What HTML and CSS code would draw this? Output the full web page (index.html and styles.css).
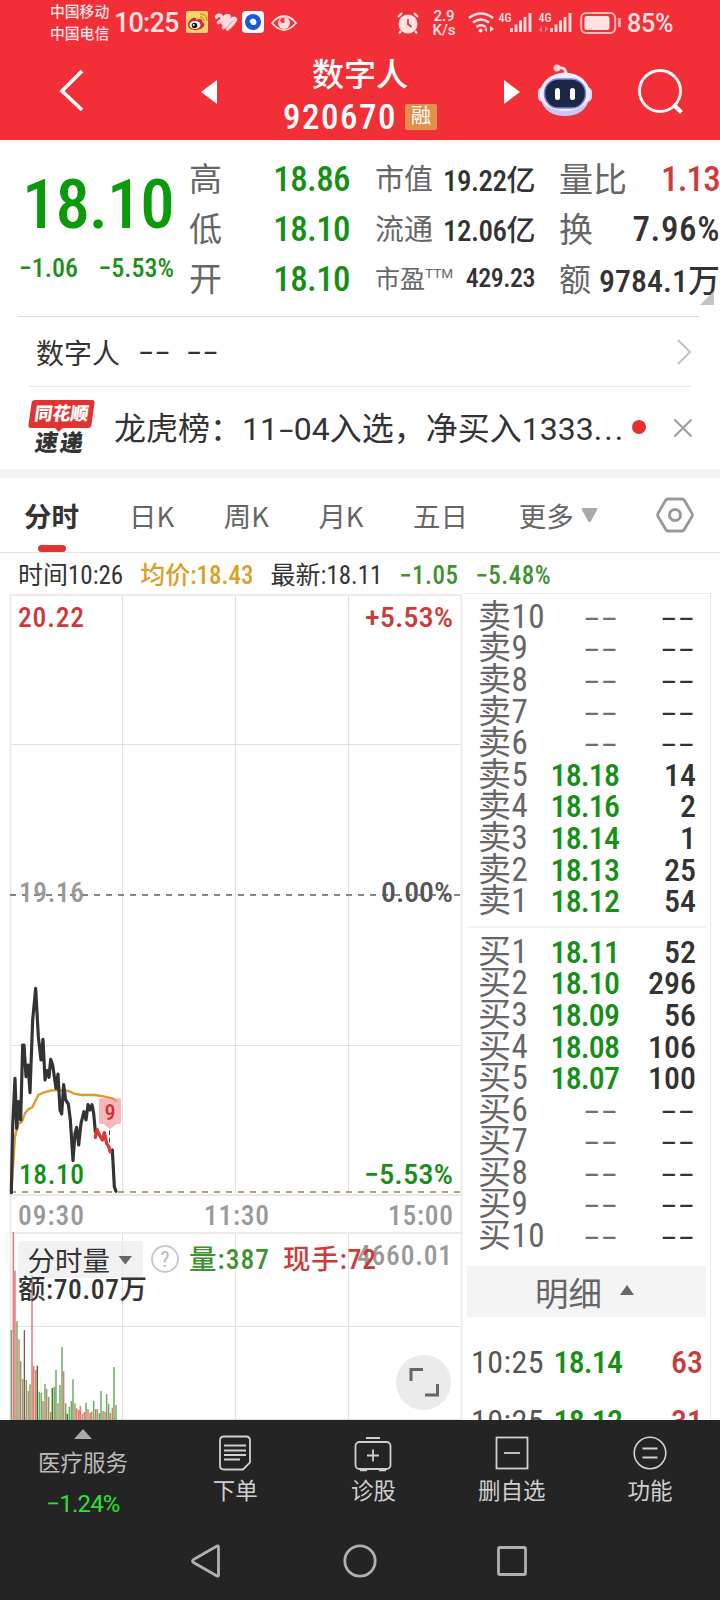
FILE: index.html
```html
<!DOCTYPE html>
<html lang="zh">
<head>
  <meta charset="utf-8">
  <title>数字人 920670</title>
  <link rel="stylesheet" href="styles.css">
</head>
<body>

<header class="top">
  <div class="status">
    <div class="carriers"><span>中国移动</span><span>中国电信</span></div>
    <span class="clock">10:25</span>
    <svg class="app-icons" width="112" height="24" viewBox="0 0 112 24">
      <!-- weibo -->
      <rect x="0" y="1" width="22" height="22" rx="2" fill="#fbd56a"/>
      <path d="M2 15C2 11 7 7 9 8c2 0 1 2 1 2s5-2 6 0c1 1 0 2 0 2 3 1 3 4 0 6-5 4-14 2-14-3z" fill="#d52a2b"/>
      <ellipse cx="9" cy="15" rx="5.5" ry="4" fill="#fff"/>
      <circle cx="8.500" cy="15.500" r="2.800" fill="#111"/>
      <circle cx="7.700" cy="15" r="1" fill="#fff"/>
      <path d="M14 7q4 0 4 4M14 4q7 0 7 7" fill="none" stroke="#e8901e" stroke-width="1.400"/>
      <!-- striped heart -->
      <g fill="none" stroke="#ffdcdc" stroke-width="3.600" stroke-linecap="round">
        <path d="M30.500 7q2-3 4.500-1M32.500 12.500l7-6q3-2 3.500 0 0 1.500-6 7M37.500 17.500l8-8q3-2.500 4 0 0 2-8 9.500"/>
      </g>
      <rect x="56" y="1" width="22" height="22" rx="4" fill="#fff"/>
      <circle cx="67" cy="12" r="8" fill="#1d56e0"/>
      <path d="M63.500 12a3.500 3.500 0 1 1 5.500 3h-3z" fill="#fff"/>
      <!-- eye -->
      <path d="M86 13q12-14 24 0-12 14-24 0z" fill="none" stroke="#ffdcdc" stroke-width="1.800"/>
      <circle cx="98" cy="13" r="6" fill="#ffdcdc"/>
      <path d="M94 10q2-3 5-2-2 2 0 4-2 2-4 0-1-1-1-2z" fill="#f13038"/>
    </svg>
    <svg class="alarm" width="24" height="24" viewBox="0 0 24 24">
      <circle cx="12" cy="13" r="9.500" fill="#ffe3e3"/>
      <path d="M2 6l4-4M22 6l-4-4M5 20l-2 2.500M19 20l2 2.500" stroke="#ffe3e3" stroke-width="2.200"/>
      <path d="M12 8v5l3.500 3" fill="none" stroke="#f13038" stroke-width="1.800"/>
    </svg>
    <div class="speed"><span>2.9</span><span>K/s</span></div>
    <svg class="radio" width="106" height="24" viewBox="0 0 106 24">
      <g fill="none" stroke="#ffe3e3" stroke-width="2.600">
        <path d="M1 7q12-9 24 0M5 11.500q8-6 16 0M8.500 16q4.500-3.500 9 0"/>
      </g>
      <circle cx="12.500" cy="19.500" r="2" fill="#ffe3e3"/>
      <path d="M19 16v5l-3-2M22 21v-6l4 3" fill="#ffe3e3"/>
      <text x="30.500" y="10.500" class="net">4G</text>
      <text x="70.500" y="10.500" class="net">4G</text>
      <path d="M43.500 17v4M48 13.500v7.500M52.500 9.500v11.500M57 6v15M62 2v19" stroke="#ffe3e3" stroke-width="2.800"/>
      <path d="M83.500 17v4M88 13.500v7.500M92.500 9.500v11.500M97 6v15M102 2v19" stroke="#ffe3e3" stroke-width="2.800"/>
      <path d="M74 15v6l-3-2M77 21v-6l3 3" fill="#f58a8e"/>
    </svg>
    <svg class="battery" width="42" height="24" viewBox="0 0 42 24">
      <rect x="1.200" y="2" width="34" height="20" rx="5" fill="none" stroke="#ffb9bc" stroke-width="2"/>
      <rect x="4.500" y="5" width="25" height="14" rx="2.500" fill="#ffe3e3"/>
      <path d="M39.500 7v9" stroke="#ffb9bc" stroke-width="2.600"/>
    </svg>
    <span class="percent">85%</span>
  </div>

  <div class="appbar">
    <svg class="back" width="26" height="44" viewBox="0 0 26 44"><path d="M23 3L3 23l20 19" fill="none" stroke="#fff" stroke-width="3.600"/></svg>
    <svg class="prev" width="16" height="24" viewBox="0 0 16 24"><path d="M0 12L16 0v24z" fill="#fff"/></svg>
    <div class="title">
      <div class="name">数字人</div>
      <div class="code">920670<span class="tag">融</span></div>
    </div>
    <svg class="next" width="16" height="24" viewBox="0 0 16 24"><path d="M16 12L0 0v24z" fill="#fff"/></svg>
    <svg class="robot" width="56" height="54" viewBox="0 0 56 54">
      <path d="M29 11q0-7-7-6" fill="none" stroke="#ffd9e2" stroke-width="3"/>
      <circle cx="20" cy="5" r="3.500" fill="#ffd0da"/>
      <rect x="1" y="24" width="54" height="15" rx="5" fill="#d9dafa"/>
      <ellipse cx="28" cy="31" rx="25" ry="21.500" fill="#f1eefc"/>
      <path d="M4 37q5 16 24 16t24-16q-8 11-24 11T4 37z" fill="#c6c8f5"/>
      <rect x="7.500" y="16" width="41" height="29" rx="14" fill="#1c2647" stroke="#7d84e8" stroke-width="1.400"/>
      <rect x="18" y="25" width="5" height="12" rx="2.500" fill="#fff"/>
      <rect x="33" y="25" width="5" height="12" rx="2.500" fill="#fff"/>
    </svg>
    <svg class="search" width="48" height="48" viewBox="0 0 48 48"><circle cx="23" cy="23" r="20.500" fill="none" stroke="#fff" stroke-width="2.800"/><path d="M36.500 36.500l8 8" stroke="#fff" stroke-width="4"/></svg>
  </div>
</header>

<section class="quote">
  <div class="price">
    <div class="last">18.10</div>
    <div class="change"><span>−1.06</span><span>−5.53%</span></div>
  </div>
  <dl class="col hlo">
    <div><dt>高</dt><dd class="down">18.86</dd></div>
    <div><dt>低</dt><dd class="down">18.10</dd></div>
    <div><dt>开</dt><dd class="down">18.10</dd></div>
  </dl>
  <dl class="col cap">
    <div><dt>市值</dt><dd>19.22亿</dd></div>
    <div><dt>流通</dt><dd>12.06亿</dd></div>
    <div class="pe"><dt>市盈<sup>TTM</sup></dt><dd>429.23</dd></div>
  </dl>
  <dl class="col vol">
    <div><dt>量比</dt><dd class="up">1.13</dd></div>
    <div><dt>换</dt><dd class="turnover">7.96%</dd></div>
    <div class="amount"><dt>额</dt><dd>9784.1万</dd></div>
  </dl>
  <i class="corner"></i>
</section>

<section class="related">
  <span class="related-name">数字人</span>
  <span class="dash">--</span>
  <span class="dash">--</span>
  <svg class="more-arrow" width="16" height="28" viewBox="0 0 16 28"><path d="M2 2l12 12L2 26" fill="none" stroke="#c4c4c4" stroke-width="2.200"/></svg>
</section>

<section class="news">
  <div class="news-logo">
    <b>同花顺</b>
    <em>速递</em>
  </div>
  <p>龙虎榜：11<span class="hyphen">-</span>04入选，净买入1333<span class="dots">...</span></p>
  <i class="dot"></i>
  <svg class="close" width="20" height="20" viewBox="0 0 20 20"><path d="M1.500 1.500l17 17M18.500 1.500l-17 17" stroke="#999" stroke-width="1.800"/></svg>
</section>

<nav class="tabs">
  <span class="tab active">分时</span>
  <span class="tab">日K</span>
  <span class="tab">周K</span>
  <span class="tab">月K</span>
  <span class="tab">五日</span>
  <span class="tab more">更多<svg width="17" height="15" viewBox="0 0 17 15"><path d="M1.500 0h14q1.500.5.500 2l-6 11q-1.500 2-3 0L1 2Q0 .5 1.500 0z" fill="#aaa"/></svg></span>
  <svg class="settings" width="38" height="36" viewBox="0 0 38 36">
    <path d="M12 2h14q1.500 0 2.500 1.500L36 16.500q.8 1.500 0 3L28.500 32q-1 2-2.500 2H12q-1.500 0-2.500-2L2 19.500q-.8-1.500 0-3L9.500 3.500Q10.500 2 12 2z" fill="none" stroke="#999" stroke-width="2.800"/>
    <circle cx="19" cy="18" r="5.500" fill="none" stroke="#999" stroke-width="3"/>
  </svg>
</nav>

<div class="info">
  <span>时间10:26</span>
  <span class="avg">均价:18.43</span>
  <span>最新:18.11</span>
  <span class="fall">−1.05</span>
  <span class="fall">−5.48%</span>
</div>

<main class="board">
  <svg class="chart" width="463" height="827" viewBox="0 593 463 827">
    <!-- grid -->
    <g fill="none" stroke="#e0e0e0" stroke-width="1">
      <path d="M122.500 595v600M235.500 595v600M348.500 595v600M122.500 1233v187M235.500 1233v187M348.500 1233v187"/>
      <path d="M10 744.500h452M10 1045.500h452M10 1326.500h452M10 1419.500h452"/>
    </g>
    <path d="M10.500 1420V595M461.500 594v826M9 595h453M9 1195h453M9 1233h453" fill="none" stroke="#ebebeb" stroke-width="2"/>
    <path d="M10 895h452" stroke="#858585" stroke-width="1.800" stroke-dasharray="6 6"/>
    <path d="M10 1192h452" stroke="#b3a377" stroke-width="1.800" stroke-dasharray="6 6"/>

    <!-- volume bars -->
    <g transform="translate(0 1210) scale(.33333)" fill="none" stroke-width="4.500">
      <path stroke="#e27b78" d="M40 630V66M45 630V182M57 630V388M68 630V507M85 630V543M96 630V195M101 630V468M107 630V480M129 630V573M140 630V537M152 630V606M174 630V579M191 630V484M225 630V580M230 630V595M236 630V599M241 630V588M247 630V612M253 630V606M264 630V597M270 630V608M275 630V605M292 630V597M315 630V605M331 630V609M337 630V593"/>
      <path stroke="#6fae62" d="M34 630V360M51 630V333M62 630V454M79 630V510M90 630V523M118 630V545M124 630V549M135 630V522M146 630V561M163 630V531M168 630V480M180 630V525M186 630V412M197 630V580M208 630V590M214 630V573M219 630V508M258 630V578M281 630V573M287 630V597M298 630V609M303 630V543M309 630V603M320 630V552M326 630V581M342 630V471M348 630V585"/>
      <path stroke="#2f7d28" d="M112 630V467M157 630V534M202 630V611"/>
      <path stroke="#555" stroke-width="3.500" d="M73 630V360"/>
    </g>

    <!-- price and average lines -->
    <g transform="translate(0 960) scale(.33333)" fill="none" stroke-linejoin="round" stroke-linecap="round">
      <path stroke="#dc9c2c" stroke-width="7" d="M34 690L40 610 45 530 55 492 66 485 75 460 85 448 97 442 105 425 115 405 130 398 155 391 175 390 207 393 222 401 245 405 285 405 310 409 338 415 347 422"/>
      <path stroke="#333" stroke-width="9.500" d="M34 698L38 500 45 355 50 505 56 425 62 480 68 255 72 255 78 350 84 315 90 398 98 180 107 85 115 230 123 300 129 238 135 360 141 332 147 352 152 298 158 315 168 385 174 342 180 450 185 462 191 374 197 420 205 432 211 480 219 602 225 520 230 502 236 555 243 490 252 455 258 480 264 434 270 450 276 434 281 460 286 515M331 575L337 570 343 680 348 694"/>
      <path stroke="#dc3636" stroke-width="10" d="M286 532L291 508 298 525 307 540 313 518 320 550 326 560 331 575"/>
      <path d="M303 415h54q6 0 6 6v66q0 5-5 5h-8l-20 16-20-16h-8q-5 0-5-5v-66q0-6 6-6z" fill="#f08a8e" fill-opacity=".6"/>
      <path d="M328.500 512v42" stroke="#444" stroke-width="3" stroke-dasharray="12 10"/>
    </g>
    <text x="110" y="1119.500" class="sig" text-anchor="middle">9</text>

    <!-- axis labels -->
    <g class="axis">
      <text x="18" y="627" class="t-up" textLength="66">20.22</text>
      <text x="365" y="627" class="t-up" textLength="88" lengthAdjust="spacingAndGlyphs">+5.53%</text>
      <text x="19" y="902" class="t-mid" textLength="65">19.16</text>
      <text x="381" y="902" class="t-zero" textLength="72" lengthAdjust="spacingAndGlyphs">0.00%</text>
      <text x="19" y="1184" class="t-down" textLength="65">18.10</text>
      <text x="364" y="1184" class="t-down" textLength="89" lengthAdjust="spacingAndGlyphs">−5.53%</text>
      <text x="18" y="1225" class="t-mid" textLength="66">09:30</text>
      <text x="204" y="1225" class="t-mid" textLength="65">11:30</text>
      <text x="388" y="1225" class="t-mid" textLength="65">15:00</text>
    </g>

    <!-- volume header -->
    <rect x="18" y="1241" width="125" height="37" rx="4" fill="#e8e8e8" fill-opacity=".6"/>
    <g class="vhead">
      <text x="27.500" y="1271" class="cn">分时量</text>
      <path d="M118.500 1256h13.500l-6.700 8.500z" fill="#666"/>
      <circle cx="165" cy="1259" r="13" fill="none" stroke="#c8c8c8" stroke-width="1.800"/>
      <text x="165" y="1267" class="help" text-anchor="middle">?</text>
      <text x="357" y="1265" class="t-mid" textLength="95">4660.01</text>
      <text x="189" y="1269" class="t-fall" textLength="80">量:387</text>
      <text x="283" y="1269" class="t-rise" textLength="93">现手:72</text>
      <text x="18" y="1299" textLength="129">额:70.07万</text>
    </g>

    <circle cx="423.500" cy="1382.500" r="27.500" fill="#ebebeb"/>
    <path d="M411 1381v-11.500h12M437.500 1384v11h-12.500" fill="none" stroke="#666" stroke-width="3"/>
  </svg>

  <aside class="book">
    <ul class="asks">
      <li><span>卖10</span><b class="dash">--</b><i class="dash">--</i></li>
      <li><span>卖9</span><b class="dash">--</b><i class="dash">--</i></li>
      <li><span>卖8</span><b class="dash">--</b><i class="dash">--</i></li>
      <li><span>卖7</span><b class="dash">--</b><i class="dash">--</i></li>
      <li><span>卖6</span><b class="dash">--</b><i class="dash">--</i></li>
      <li><span>卖5</span><b>18.18</b><i>14</i></li>
      <li><span>卖4</span><b>18.16</b><i>2</i></li>
      <li><span>卖3</span><b>18.14</b><i>1</i></li>
      <li><span>卖2</span><b>18.13</b><i>25</i></li>
      <li><span>卖1</span><b>18.12</b><i>54</i></li>
    </ul>
    <ul class="bids">
      <li><span>买1</span><b>18.11</b><i>52</i></li>
      <li><span>买2</span><b>18.10</b><i>296</i></li>
      <li><span>买3</span><b>18.09</b><i>56</i></li>
      <li><span>买4</span><b>18.08</b><i>106</i></li>
      <li><span>买5</span><b>18.07</b><i>100</i></li>
      <li><span>买6</span><b class="dash">--</b><i class="dash">--</i></li>
      <li><span>买7</span><b class="dash">--</b><i class="dash">--</i></li>
      <li><span>买8</span><b class="dash">--</b><i class="dash">--</i></li>
      <li><span>买9</span><b class="dash">--</b><i class="dash">--</i></li>
      <li><span>买10</span><b class="dash">--</b><i class="dash">--</i></li>
    </ul>
    <div class="detail">明细<svg width="14" height="10" viewBox="0 0 14 10"><path d="M0 10L7 0l7 10z" fill="#666"/></svg></div>
    <ul class="ticks">
      <li><span>10:25</span><b>18.14</b><i>63</i></li>
      <li><span>10:25</span><b>18.12</b><i>31</i></li>
    </ul>
  </aside>
</main>

<footer class="bottom">
  <div class="sector">
    <svg width="18" height="10" viewBox="0 0 18 10"><path d="M0 10L9 0l9 10z" fill="#aaa"/></svg>
    <span>医疗服务</span>
    <b>−1.24%</b>
  </div>
  <div class="item">
    <svg width="38" height="38" viewBox="0 0 38 38"><path d="M8 2.500h22q4 0 4 4v22l-7 7H8q-4 0-4-4v-25q0-4 4-4z" fill="none" stroke="#d0d0d0" stroke-width="1.800"/><path d="M8 11.500h22M8 16.500h22M8 21h22M8 25.500h16" stroke="#d0d0d0" stroke-width="1.800"/></svg>
    <span>下单</span>
  </div>
  <div class="item">
    <svg width="38" height="38" viewBox="0 0 38 38"><rect x="1.500" y="8" width="35" height="27" rx="4" fill="none" stroke="#d0d0d0" stroke-width="1.800"/><path d="M12 4h14M19 15.500v12M13 21.500h12" fill="none" stroke="#d0d0d0" stroke-width="1.800"/><path d="M6 36h7M25 36h7" stroke="#d0d0d0" stroke-width="2.500"/></svg>
    <span>诊股</span>
  </div>
  <div class="item">
    <svg width="38" height="38" viewBox="0 0 38 38"><rect x="3.500" y="3.500" width="31" height="31" fill="none" stroke="#d0d0d0" stroke-width="1.800"/><path d="M11 19h16" stroke="#d0d0d0" stroke-width="1.800"/></svg>
    <span>删自选</span>
  </div>
  <div class="item">
    <svg width="38" height="38" viewBox="0 0 38 38"><circle cx="19" cy="19" r="15.800" fill="none" stroke="#d0d0d0" stroke-width="1.600"/><path d="M11.500 14.500h15M11.500 23.500h15" stroke="#d0d0d0" stroke-width="1.800"/></svg>
    <span>功能</span>
  </div>
</footer>

<div class="sysnav">
  <svg width="32" height="36" viewBox="0 0 32 36"><path d="M3.500 16.500L27 3q1.500-.5 1.500 1v28q0 1.500-1.500 1L3.500 19.500q-2-1.500 0-3z" fill="none" stroke="#b0b0b0" stroke-width="2.800"/></svg>
  <svg class="home" width="36" height="36" viewBox="0 0 36 36"><circle cx="18" cy="18" r="15.200" fill="none" stroke="#b0b0b0" stroke-width="2.800"/></svg>
  <svg width="36" height="36" viewBox="0 0 36 36"><rect x="4.500" y="4.500" width="27" height="27" rx="1.500" fill="none" stroke="#b0b0b0" stroke-width="2.800"/></svg>
</div>

</body>
</html>
```

FILE: styles.css
```css
* {
  box-sizing: border-box;
}
body {
  margin: 0;
  width: 720px;
  height: 1600px;
  overflow: hidden;
  background: #fff;
  color: #333;
  font-family: "Roboto Condensed", "Noto Sans CJK SC", sans-serif;
}
ul, dl, dd, p {
  margin: 0;
  padding: 0;
}
ul {
  list-style: none;
}
i, em {
  font-style: normal;
}
svg {
  display: block;
  flex: none;
}

/* header */
.top {
  height: 140px;
  background: #f22f37;
  color: #fff;
}
.status {
  display: flex;
  align-items: center;
  height: 46px;
  padding-left: 50px;
  color: #ffe3e3;
}
.carriers {
  display: flex;
  flex-direction: column;
  width: 64px;
  font-size: 14.8px;
  font-weight: 500;
  line-height: 22px;
}
.clock {
  width: 72px;
  font: 500 27px/46px Roboto, sans-serif;
  letter-spacing: -0.8px;
}
.app-icons {
  margin-top: -3px;
}
.alarm {
  margin-left: 98px;
}
.speed {
  display: flex;
  flex-direction: column;
  align-items: center;
  width: 28px;
  margin-left: 10px;
  font: 500 15px/14px Roboto, sans-serif;
}
.radio {
  margin-left: 10px;
}
.net {
  font: 500 12px "Roboto Condensed", sans-serif;
  fill: #ffe3e3;
}
.battery {
  margin-left: 6px;
}
.percent {
  margin: 2px 0 0 5px;
  font: 500 25px/46px Roboto, sans-serif;
  letter-spacing: -0.2px;
}
.appbar {
  display: flex;
  height: 94px;
}
.back {
  margin: 22px 0 0 59px;
}
.prev {
  margin: 34px 0 0 116px;
}
.title {
  width: 221px;
  margin-left: 66px;
}
.name {
  width: 154px;
  text-align: center;
  font-size: 32px;
  font-weight: 500;
  line-height: 58px;
}
.code {
  display: flex;
  align-items: center;
  height: 26px;
  font-size: 35px;
  font-weight: 500;
  letter-spacing: 1.5px;
}
.tag {
  width: 32px;
  height: 26px;
  margin-left: 8px;
  border-radius: 2px;
  background: #e2904a;
  font-size: 20px;
  font-weight: 400;
  letter-spacing: 0;
  line-height: 25px;
  text-align: center;
}
.next {
  margin: 34px 0 0 0;
}
.robot {
  margin: 17px 0 0 17px;
}
.search {
  margin: 22px 0 0 44px;
}

/* quote summary */
.quote {
  position: relative;
  display: flex;
  height: 177px;
  padding-top: 14px;
}
.quote::after {
  content: "";
  position: absolute;
  left: 18px;
  right: 21px;
  bottom: 0;
  border-bottom: 1px solid #ddd;
}
.price {
  width: 189px;
  color: #0a9a0a;
}
.last {
  height: 100px;
  padding-left: 22px;
  font-size: 69px;
  font-weight: 500;
  line-height: 102px;
  letter-spacing: -1.1px;
}
.change {
  display: flex;
  justify-content: space-between;
  padding: 0 15px 0 19px;
  font-size: 26px;
  font-weight: 500;
  line-height: 28px;
  color: #1c8e1c;
}
.col > div {
  display: flex;
  align-items: center;
  justify-content: space-between;
  height: 50px;
}
.col dt {
  margin-top: -4px;
  color: #666;
}
.col dd {
  font-weight: 500;
  white-space: nowrap;
}
.hlo {
  width: 161px;
  font-size: 35px;
}
.hlo dt {
  font-size: 33px;
}
.hlo .down {
  color: #168f16;
  letter-spacing: -0.6px;
}
.cap {
  width: 160px;
  margin-left: 25px;
  font-size: 29px;
}
.cap dd {
  margin-top: -3px;
  letter-spacing: -0.5px;
}
.cap .pe {
  font-size: 26px;
}
.pe dt {
  font-size: 25px;
}
.pe sup {
  font-family: Roboto, sans-serif;
  font-size: 13.5px;
  line-height: 0;
  vertical-align: 10px;
}
.vol {
  width: 161px;
  margin-left: 24px;
  font-size: 35px;
}
.vol dt {
  font-size: 34px;
}
.vol .up {
  color: #cd3c3c;
  letter-spacing: -0.8px;
}
.vol .turnover {
  letter-spacing: 0.6px;
}
.vol .amount dt {
  font-size: 32px;
}
.vol .amount dd {
  margin-top: -2px;
  font-size: 32px;
}
.corner {
  position: absolute;
  left: 700px;
  top: 151px;
  border-left: 14px solid transparent;
  border-bottom: 14px solid #c4c4c4;
}

/* related row */
.related {
  display: flex;
  align-items: center;
  height: 70px;
  margin: 0 28px;
  padding-left: 8px;
  border-bottom: 1px solid #eaeaea;
}
.related-name {
  width: 103px;
  font-size: 28px;
}
.dash {
  display: inline-block;
  transform: scaleX(1.9);
  transform-origin: left;
  letter-spacing: 1.3px;
  font-size: 32px;
}
.related .dash {
  width: 48px;
  font-size: 30px;
}
.more-arrow {
  margin-left: auto;
}

/* news */
.news {
  display: flex;
  align-items: center;
  height: 82px;
  padding-left: 30px;
}
.news-logo {
  width: 66px;
  text-align: center;
}
.news-logo b,
.news-logo em {
  display: block;
  transform: skewX(-8deg);
  font-weight: 900;
}
.news-logo b {
  position: relative;
  width: 63px;
  height: 28px;
  margin-top: -1px;
  border-radius: 3px;
  background: #e03434;
  color: #fff;
  font-size: 18px;
  line-height: 27px;
}
.news-logo b::after {
  content: "";
  position: absolute;
  left: 27px;
  top: 28px;
  border: 4px solid transparent;
  border-top-color: #e03434;
}
.news-logo em {
  width: 60px;
  height: 25px;
  margin-top: 3px;
  font-size: 23px;
  line-height: 25px;
  letter-spacing: 2px;
}
.news p {
  width: 532px;
  padding: 2px 0 0 18px;
  font-family: Roboto, "Noto Sans CJK SC", sans-serif;
  font-size: 32px;
  line-height: 80px;
  white-space: nowrap;
}
.hyphen {
  display: inline-block;
  margin: 0 3px 0 4px;
  transform: scaleX(1.6);
}
.dots {
  letter-spacing: 2px;
}
.dot {
  width: 14px;
  height: 14px;
  margin: -3px 0 0 4px;
  border-radius: 50%;
  background: #e63030;
}
.close {
  margin: 0 0 0 27px;
}

/* chart tabs */
.tabs {
  display: flex;
  height: 84px;
  border-top: 9px solid #f4f4f4;
  border-bottom: 1px solid #e2e2e2;
  padding-left: 24px;
  font-family: "Noto Sans CJK SC", sans-serif;
  font-size: 27.5px;
  line-height: 75px;
  color: #666;
}
.tab {
  position: relative;
  width: 94.7px;
}
.tab.active {
  width: 105px;
  font-weight: 700;
  color: #333;
}
.tab.active::after {
  content: "";
  position: absolute;
  left: 14px;
  bottom: 0;
  width: 28px;
  height: 7px;
  border-radius: 4px;
  background: #e03434;
}
.tab.more {
  display: flex;
  align-items: center;
  gap: 7px;
  width: 124px;
  margin-left: 11px;
}
.settings {
  margin: 19px 0 0 13px;
}

/* line under the tabs */
.info {
  display: flex;
  gap: 17px;
  height: 40px;
  padding-left: 18px;
  font-size: 25px;
  line-height: 46px;
}
.avg {
  font-weight: 500;
  color: #dba02a;
}
.fall {
  font-weight: 500;
  letter-spacing: 0.5px;
  color: #3f9230;
}

/* chart */
.board {
  display: flex;
  height: 827px;
  overflow: hidden;
}
.axis, .vhead {
  font-size: 27.5px;
  fill: #333;
}
.axis text,
.vhead text {
  font-weight: 500;
}
.axis .t-up, .t-rise {
  fill: #c93c3c;
}
.axis .t-down {
  fill: #168f16;
}
.t-fall {
  fill: #3f9230;
}
.t-mid {
  fill: #999;
}
.axis .t-zero {
  fill: #555;
}
.vhead .cn,
.vhead .help {
  font-weight: 400;
}
.help {
  font-size: 22px;
  fill: #bbb;
}
.sig {
  font-size: 22px;
  font-weight: 500;
  fill: #d23030;
}

/* order book */
.book {
  width: 248px;
  border: 1px solid #eaeaea;
  border-width: 1px 1px 0 0;
  padding: 7px 0 0 4px;
}
.book li {
  display: flex;
  align-items: center;
  height: 31.6px;
  padding: 0 10px 0 11px;
  font-size: 32px;
  line-height: 32px;
}
.book li span {
  width: 70px;
  font-size: 33px;
  letter-spacing: 0.5px;
  color: #666;
}
.book li b {
  width: 71px;
  text-align: right;
  font-weight: 500;
  letter-spacing: -0.9px;
  color: #168f16;
}
.book li i {
  flex: 1;
  text-align: right;
  font-weight: 500;
}
.book li .dash {
  transform-origin: right;
  letter-spacing: 1.2px;
  font-weight: 400;
}
.book li b.dash {
  color: #707070;
}
.asks {
  margin-right: 4px;
  padding-bottom: 9px;
  border-bottom: 2px solid #f4f4f4;
}
.bids {
  margin-right: 4px;
  padding-top: 8px;
}
.detail {
  display: flex;
  align-items: center;
  gap: 18px;
  height: 51px;
  margin: 14px 4px 0 0;
  padding-left: 68px;
  background: #f4f4f4;
  font-size: 33.5px;
  color: #666;
}
.detail svg {
  margin-top: -3px;
}
.ticks {
  padding-top: 16px;
}
.book .ticks li {
  height: 59px;
  padding: 0 7px 0 4px;
}
.book .ticks span {
  width: 76px;
  font-size: 32px;
  color: #555;
}
.book .ticks b {
  width: 75px;
}
.book .ticks i {
  color: #c93c3c;
}

/* bottom bar */
.bottom {
  display: flex;
  height: 100px;
  background: #242424;
  color: #d0d0d0;
  font-size: 22.5px;
}
.sector, .item {
  display: flex;
  flex-direction: column;
  align-items: center;
}
.sector {
  width: 166px;
  padding-top: 9px;
  color: #bbb;
}
.sector span {
  margin-top: 8px;
  line-height: 33px;
}
.sector b {
  margin-top: 8px;
  font: 400 24px/32px Roboto, sans-serif;
  letter-spacing: -0.8px;
  color: #2fe02f;
}
.item {
  width: 138.3px;
  padding-top: 14px;
}
.item span {
  margin-top: 4px;
  line-height: 31px;
}
.sysnav {
  display: flex;
  justify-content: space-between;
  height: 80px;
  padding: 23px 190px 0;
  background: #242424;
}
.home {
  margin-left: 4px;
}
```
